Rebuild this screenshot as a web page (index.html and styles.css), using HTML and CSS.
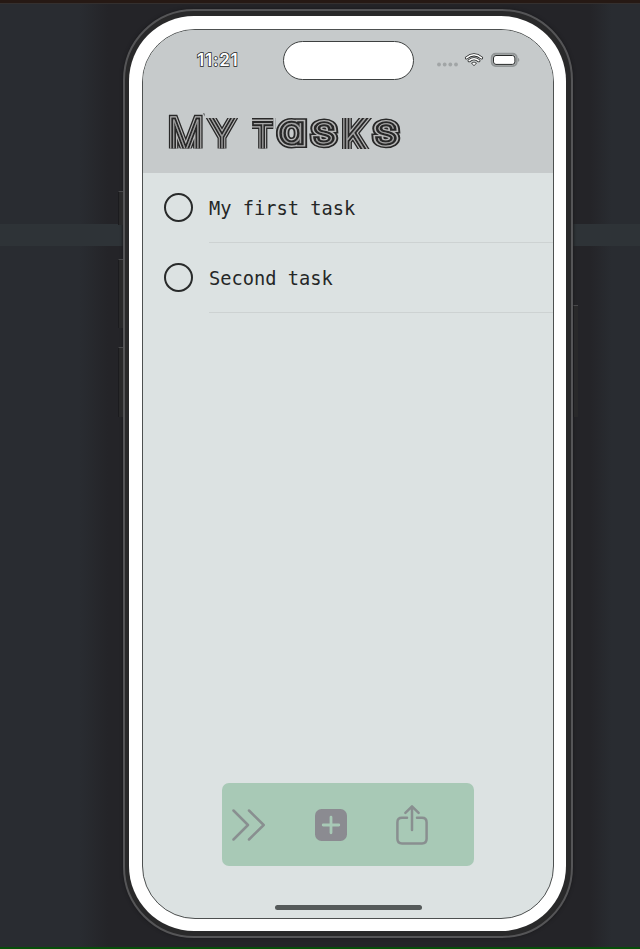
FILE: index.html
```html
<!DOCTYPE html>
<html lang="en">
<head>
<meta charset="utf-8">
<title>My tasks</title>
<link rel="stylesheet" href="styles.css">
</head>
<body>
<main class="stage">
  <div class="phone">
    <i class="key key-action"></i><i class="key key-up"></i><i class="key key-down"></i><i class="key key-power"></i>
    <div class="bezel">
      <div class="screen">
        <header class="header">
          <div class="status">
            <span class="time">11:21</span>
            <span class="island"></span>
            <svg class="signals" width="84" height="18" viewBox="0 0 84 18">
              <g fill="#a1a5a6"><circle cx="3" cy="13.5" r="1.9"/><circle cx="8.7" cy="13.5" r="1.9"/><circle cx="14.3" cy="13.5" r="1.9"/><circle cx="20" cy="13.5" r="1.9"/></g>
              <g fill="none" stroke-linecap="round">
                <path d="M30.5 6.9Q38 .8 45.5 6.9M33.2 9.7Q38 5.8 42.8 9.7" stroke="#272929" stroke-width="3.1"/>
                <path d="M30.5 6.9Q38 .8 45.5 6.9M33.2 9.7Q38 5.8 42.8 9.7" stroke="#fff" stroke-width="1.5"/>
              </g>
              <path d="M35.5 12Q38 10.2 40.5 12L38 14.8Z" fill="#fff" stroke="#272929" stroke-width=".8"/>
              <rect x="55.7" y="2.7" width="25" height="12.4" rx="4" fill="#c6cacb" stroke="#929697" stroke-width="1.9"/>
              <rect x="57.5" y="4.5" width="21.4" height="8.9" rx="2.5" fill="#fff" stroke="#272929"/>
              <path d="M82 6.7q2.7 2.2 0 4.4z" fill="#929697"/>
            </svg>
          </div>
          <h1 class="title">
            <svg width="240" height="44" viewBox="164 108 240 44" role="img">
              <defs>
                <clipPath id="band"><path d="M164 113.5H204.5V118H238V148.5H164ZM252 117.8H273.3V148.5H252ZM275.7 115H339V149H275.7ZM340 118H404V149H340Z"/></clipPath>
                <text id="name" class="letters"><tspan x="169" y="151" font-size="43" textLength="33.5" lengthAdjust="spacingAndGlyphs">M</tspan><tspan x="209.3" y="154" font-size="50" textLength="25.5" lengthAdjust="spacingAndGlyphs">Y</tspan><tspan> </tspan><tspan x="251.7" y="154" font-size="42.5" textLength="22" lengthAdjust="spacingAndGlyphs">T</tspan><tspan class="round" x="279.3" y="143" font-size="36" textLength="26" lengthAdjust="spacingAndGlyphs">a</tspan><tspan x="313.5" y="143" font-size="26.5" textLength="21" lengthAdjust="spacingAndGlyphs">S</tspan><tspan x="341" y="155" font-size="54" textLength="28.5" lengthAdjust="spacingAndGlyphs">K</tspan><tspan x="375.5" y="143" font-size="26.5" textLength="21" lengthAdjust="spacingAndGlyphs">S</tspan></text>
              </defs>
              <g clip-path="url(#band)">
                <use href="#name" class="l1"/><use href="#name" class="l2"/><use href="#name" class="l3"/><use href="#name" class="l4"/>
              </g>
            </svg>
          </h1>
        </header>
        <ul class="tasks">
          <li class="task"><span class="check"></span><span class="label">My first task</span></li>
          <li class="task"><span class="check"></span><span class="label">Second task</span></li>
        </ul>
        <nav class="toolbar">
          <svg width="34" height="34" viewBox="0 0 34 34"><path d="M1.5 2.5 16 17 1.5 31.5M17 2.5 31.7 17 17 31.5"/></svg>
          <svg width="32" height="32" viewBox="0 0 32 32"><rect width="32" height="32" rx="6.5" fill="#8b8b91" stroke="none"/><path class="plus" d="M16 8.2v15.6M8.2 16h15.6"/></svg>
          <svg width="32" height="40" viewBox="0 0 32 40"><path d="M11 12.8H6q-4.6 0-4.6 4.6v16.4q0 4.7 4.6 4.7h20q4.6 0 4.6-4.7V17.4q0-4.6-4.6-4.6h-5M16 25V2M9.4 7.8 16 1.4l6.6 6.4"/></svg>
        </nav>
        <div class="home"></div>
      </div>
    </div>
  </div>
</main>
</body>
</html>
```
FILE: styles.css
```css
* { box-sizing: border-box; }
body { margin: 0; background: #292c31; }
.stage {
  height: 949px;
  padding: 9px 67px 0 123px;
  overflow: hidden;
  border-bottom: 2px solid #064e08;
  background:
    linear-gradient(#261914 0 3px, #34302f 3px 4px, transparent 4px),
    linear-gradient(transparent 224px, #2e3337 224px 246px, transparent 246px),
    linear-gradient(90deg, #292c31 80px, #242428 108px, #242428 590px, #292c31 612px);
}
.phone {
  position: relative;
  height: 929px;
  padding: 5px 5px 5px 4px;
  border: 2px solid #555557;
  border-radius: 71px;
  background: #29292a;
  box-shadow: 0 0 3px 1px #1d1d20;
}
.key { position: absolute; left: -7px; width: 5px; background: #29292a; border-top: 1px solid #48484a; border-left: 1px solid #1b1b1e; }
.key-action { top: 180px; height: 34px; }
.key-up { top: 248px; height: 69px; }
.key-down { top: 336px; height: 70px; }
.key-power { left: auto; right: -7px; top: 294px; height: 112px; }
.bezel { height: 100%; padding: 13px 12px 13px 13px; border-radius: 65px; background: #fff; }
.screen {
  display: flex;
  flex-direction: column;
  align-items: center;
  height: 890px;
  overflow: hidden;
  border: 1px solid #4d5050;
  border-radius: 53px;
  background: #dce2e2;
}
.header { align-self: stretch; height: 143px; flex: none; background: #c6cacb; }
.status { display: flex; align-items: center; height: 60px; padding-left: 54px; }
.time {
  width: 86px;
  font: 600 17px/20px Inter, sans-serif;
  letter-spacing: .8px;
  color: #fff;
  -webkit-text-stroke: 1.5px #252727;
  paint-order: stroke;
}
.island { width: 131px; height: 39px; border: 1px solid #3d4040; border-radius: 20px; background: #fff; }
.signals { margin-left: 22px; }
.title { margin: 18px 0 0 21px; line-height: 0; }
.title svg { filter: grayscale(1); }
.letters { font-family: Inter, sans-serif; font-weight: 100; text-rendering: geometricPrecision; }
.round { font-feature-settings: "cv11"; }
.l1 { fill: #262829; stroke: #262829; stroke-width: 10px; }
.l2 { fill: #b4b8b9; stroke: #b4b8b9; stroke-width: 7px; }
.l3 { fill: #262829; stroke: #262829; stroke-width: 4.4px; }
.l4 { fill: #a4a8a9; stroke: #a4a8a9; stroke-width: .4px; }
.tasks { align-self: stretch; margin: 0; padding: 0; list-style: none; }
.task { display: flex; height: 70px; padding-left: 21px; }
.check { width: 29px; height: 29px; margin: 20px 16px 0 0; border: 2px solid #292b2b; border-radius: 50%; }
.label {
  flex: 1;
  padding-top: 24px;
  border-bottom: 1px solid #cdd2d2;
  font: 18.7px/24px "DejaVu Sans Mono", monospace;
  color: #252727;
}
.toolbar {
  display: flex;
  align-items: center;
  width: 252px;
  height: 83px;
  margin: auto 0 39px;
  padding-left: 10px;
  border-radius: 7px;
  background: #a8c9b6;
}
.toolbar svg { fill: none; stroke: #898f90; stroke-width: 2.5; stroke-linecap: round; stroke-linejoin: round; }
.toolbar svg + svg { margin-left: 49px; }
.toolbar .plus { stroke: #a8c9b6; stroke-width: 2.8; }
.home { width: 147px; height: 5px; margin-bottom: 8px; border-radius: 3px; background: #555a5a; }
```
